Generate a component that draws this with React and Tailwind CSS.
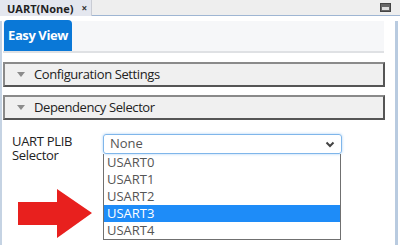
import React from 'react';

const options = ['USART0', 'USART1', 'USART2', 'USART3', 'USART4'];

const SectionHeader = ({ title }) => (
  <div className="h-[25px] flex items-center bg-[#f0f0f0] border-2 border-t-[#8a8a8a] border-l-[#8a8a8a] border-r-[#555] border-b-[#555]">
    <svg width="10" height="7" viewBox="0 0 10 7" className="ml-[11px] mr-[8px]">
      <path d="M1 1 L9 1 L5 6 Z" fill="#8c8c8c" />
    </svg>
    <span className="text-[13px] tracking-[-0.4px] text-[#222]">{title}</span>
  </div>
);

const App = () => {
  return (
    <div className="w-[400px] h-[245px] bg-white overflow-hidden relative" style={{ fontFamily: '"Open Sans", "Noto Sans", sans-serif' }}>
      {/* tab strip */}
      <div className="h-[16px] flex bg-[#eeeeee]">
        <div className="w-[92px] h-[16px] bg-[#e4e7ef] border-r border-[#c9ccd4] flex items-center pl-[7px]">
          <span className="text-[11px] font-bold text-[#222] leading-none whitespace-nowrap">UART(None)</span>
          <span className="text-[10px] font-bold text-[#333] ml-[8px] leading-none">×</span>
        </div>
        <div className="flex-1 border-b border-[#9fb6d3] flex justify-end items-center pr-[9px]">
          <div className="w-[11px] h-[9px] bg-[#666] border border-[#444] flex items-end justify-center pb-[1px]">
            <div className="w-[7px] h-[3px] bg-[#ddd]" />
          </div>
        </div>
      </div>

      <div className="h-[229px] border-l-2 border-[#c5d3e3] border-r-[3px] border-r-[#b9cbe0] mr-[2px] pl-[1px] pr-[10px]">
        {/* view tabs */}
        <div className="mt-[5px] h-[32px] bg-[#f6f7f9] border-b-2 border-[#dfe1e4] flex items-end mr-[1px]">
          <div className="h-[31px] w-[68px] ml-[1px] bg-[#0a78d7] rounded-t-[4px] flex items-center justify-center">
            <span className="text-[13px] font-bold tracking-[-0.4px] text-white whitespace-nowrap">Easy View</span>
          </div>
        </div>

        <div className="mt-[9px] flex flex-col gap-[8px]">
          <SectionHeader title="Configuration Settings" />
          <SectionHeader title="Dependency Selector" />
        </div>

        <div className="flex mt-[14px]">
          <div className="w-[100px] pl-[9px] text-[13px] leading-[14px] tracking-[-0.3px] text-[#222]">
            UART PLIB<br />Selector
          </div>
          <div className="w-[239px]">
            <div className="h-[20px] border border-[#7fb6ea] rounded-[3px] shadow-[0_0_3px_#a9d0f5] flex items-center justify-between px-[6px]">
              <span className="text-[13px] text-[#555]">None</span>
              <svg width="10" height="7" viewBox="0 0 10 7">
                <path d="M1.5 1.5 L5 5 L8.5 1.5" stroke="#444" strokeWidth="2" fill="none" />
              </svg>
            </div>
            <div className="w-[238px] border border-[#707070] border-t-0 flex flex-col">
              {options.map((o) => (
                <div
                  key={o}
                  className={
                    o === 'USART3'
                      ? 'h-[17px] flex items-center pl-[3px] text-[13px] bg-[#1e8cf8] text-white'
                      : 'h-[17px] flex items-center pl-[3px] text-[13px] text-[#555]'
                  }
                >
                  {o}
                </div>
              ))}
            </div>
          </div>
        </div>
      </div>

      {/* red arrow */}
      <svg className="absolute left-[18px] top-[189px]" width="76" height="50" viewBox="0 0 76 50">
        <path d="M0 13 L39 13 L39 0 L74 24 L39 49 L39 36 L0 36 Z" fill="#e8201e" />
      </svg>
    </div>
  );
};

export default App;
